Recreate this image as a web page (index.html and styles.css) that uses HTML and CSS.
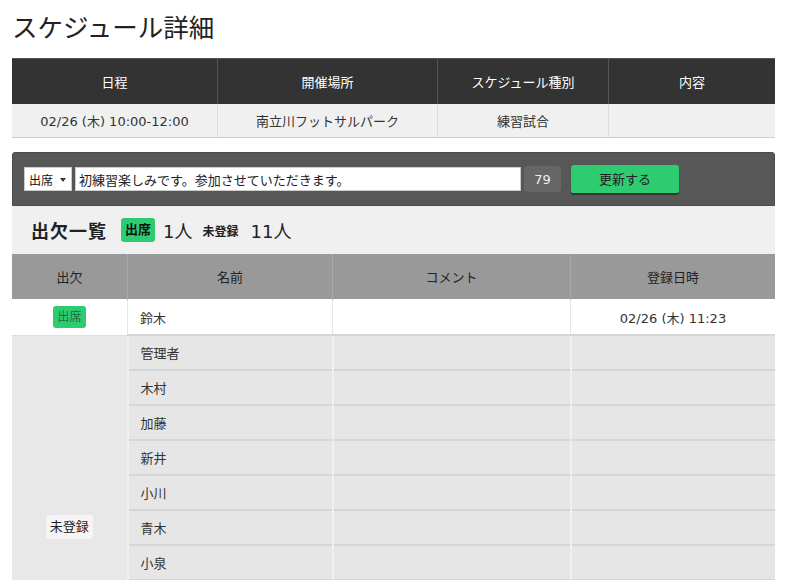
FILE: index.html
```html
<!DOCTYPE html>
<html lang="ja">
<head>
<meta charset="utf-8">
<link rel="stylesheet" href="styles.css">
</head>
<body>
<div class="page">
  <h1 class="title">スケジュール詳細</h1>
  <table class="info">
    <thead>
      <tr><th class="c1">日程</th><th class="c2">開催場所</th><th class="c3">スケジュール種別</th><th class="c4">内容</th></tr>
    </thead>
    <tbody>
      <tr><td>02/26 (木) 10:00-12:00</td><td>南立川フットサルパーク</td><td>練習試合</td><td></td></tr>
    </tbody>
  </table>

  <div class="panel">
    <div class="select">出席<span class="caret"></span></div>
    <div class="input">初練習楽しみです。参加させていただきます。</div>
    <div class="count">79</div>
    <div class="btn">更新する</div>
  </div>

  <div class="summary">
    <span class="sum-title">出欠一覧</span>
    <span class="badge-on">出席</span>
    <span class="num">1人</span>
    <span class="unreg">未登録</span>
    <span class="num">11人</span>
  </div>

  <table class="att">
    <thead>
      <tr><th class="a1">出欠</th><th class="a2">名前</th><th class="a3">コメント</th><th class="a4">登録日時</th></tr>
    </thead>
    <tbody>
      <tr class="yes"><td class="st"><span class="badge-sm">出席</span></td><td class="nm">鈴木</td><td></td><td class="dt">02/26 (木) 11:23</td></tr>
      <tr class="no"><td class="st" rowspan="11"><span class="badge-un">未登録</span></td><td class="nm">管理者</td><td></td><td></td></tr>
      <tr class="no"><td class="nm">木村</td><td></td><td></td></tr>
      <tr class="no"><td class="nm">加藤</td><td></td><td></td></tr>
      <tr class="no"><td class="nm">新井</td><td></td><td></td></tr>
      <tr class="no"><td class="nm">小川</td><td></td><td></td></tr>
      <tr class="no"><td class="nm">青木</td><td></td><td></td></tr>
      <tr class="no"><td class="nm">小泉</td><td></td><td></td></tr>
      <tr class="no"><td class="nm"></td><td></td><td></td></tr>
      <tr class="no"><td class="nm"></td><td></td><td></td></tr>
      <tr class="no"><td class="nm"></td><td></td><td></td></tr>
      <tr class="no"><td class="nm"></td><td></td><td></td></tr>
    </tbody>
  </table>
</div>
</body>
</html>
```
FILE: styles.css
```css
html, body { margin: 0; padding: 0; background: #fff; }
body {
  font-family: "DejaVu Sans", "Noto Sans CJK JP", sans-serif;
  font-size: 13px;
  color: #333;
}
.page { width: 763px; padding: 0 12px; }
.title {
  margin: 0;
  padding-top: 9px;
  height: 58px;
  box-sizing: border-box;
  font-family: "Noto Sans CJK JP", sans-serif;
  font-size: 25.5px;
  font-weight: normal;
  color: #222;
  line-height: 34px;
}
table { border-collapse: collapse; width: 763px; table-layout: fixed; }
.info th {
  background: #333;
  color: #fff;
  font-weight: normal;
  height: 45px;
  padding: 0;
  border-left: 1px solid #555;
  border-top: 1px solid #555;
}
.info th:first-child, .info td:first-child { border-left: none; }
.info .c1 { width: 205px; }
.info .c2 { width: 219px; }
.info .c3 { width: 170px; }
.info td {
  background: #f0f0f0;
  height: 33px;
  padding: 0;
  text-align: center;
  border-left: 1px solid #ddd;
  border-bottom: 1px solid #ccc;
}
.panel {
  margin-top: 14px;
  height: 54px;
  box-sizing: border-box;
  background: #575757;
  border: 1px solid #4a4a4a;
  border-radius: 3px 3px 0 0;
  display: flex;
  align-items: center;
  padding: 0 11px;
}
.select {
  width: 48px; height: 24px; box-sizing: border-box;
  background: #fff; border: 1px solid #ccc;
  display: flex; align-items: center; padding-left: 4px;
  font-size: 12px; color: #111;
  position: relative;
}
.caret {
  position: absolute; right: 5px; top: 10px;
  width: 0; height: 0;
  border-left: 3px solid transparent; border-right: 3px solid transparent;
  border-top: 4px solid #333;
}
.input {
  margin-left: 3px;
  width: 446px; height: 24px; box-sizing: border-box;
  background: #fff; border: 1px solid #ccc;
  padding-left: 3px; display: flex; align-items: center;
  font-size: 13px; color: #222;
}
.count {
  margin-left: 3px;
  width: 37px; height: 26px;
  background: #666; border-radius: 4px;
  color: #eee; display: flex; align-items: center; justify-content: center;
  font-size: 13px;
}
.btn {
  margin-left: 10px;
  width: 108px; height: 29px; box-sizing: border-box;
  background: #2ecc71; border-radius: 3px;
  border-bottom: 1px solid #333;
  box-shadow: 0 1px 1px rgba(0,0,0,0.4);
  display: flex; align-items: center; justify-content: center;
  color: #222; font-size: 13px;
}
.summary {
  height: 48px;
  background: #f0f0f0;
  display: flex; align-items: center;
  padding-left: 19px;
  color: #222;
}
.sum-title { font-size: 18px; font-weight: bold; margin-right: 14px; letter-spacing: 1px; }
.badge-on {
  background: #2ecc71; color: #111; font-weight: bold;
  font-size: 13px; padding: 0 4px; height: 24px; line-height: 24px;
  border-radius: 3px; margin-right: 8px;
}
.num { font-size: 18px; margin-right: 10px; }
.unreg { font-size: 12px; font-weight: bold; margin-right: 12px; }
.att th {
  background: #999;
  color: #222;
  font-weight: normal;
  height: 45px;
  padding: 0;
  border-left: 1px solid #aaa;
}
.att th:first-child { border-left: none; }
.att .a1 { width: 115px; }
.att .a2 { width: 204px; }
.att .a3 { width: 237px; }
.att td { padding: 0; height: 34px; }
.att tr.yes td {
  background: #fff;
  border-left: 1px solid #e6e6e6;
  border-bottom: 1px solid #ddd;
  border-top: 1px solid #fff;
}
.att tr.yes td:first-child { border-left: none; }
.att tr.no td {
  background: #e6e6e6;
  border-left: 2px solid #f0f0f0;
  border-top: 2px solid #d6d6d6;
  height: 33px;
}
.att tr.no td.st {
  border-left: none;
  border-top: 1px solid #ddd;
  background: #e8e8e8;
  vertical-align: middle;
  text-align: center;
}
.st { text-align: center; }
.nm { padding-left: 12px !important; text-align: left; }
.dt { text-align: center; }
.badge-sm {
  display: inline-block;
  background: #2ecc71; color: #1d6f3a;
  font-size: 12px; padding: 0 4px; height: 22px; line-height: 22px;
  border-radius: 3px;
}
.badge-un {
  display: inline-block;
  background: #f5f5f5; color: #222;
  font-size: 13px; padding: 0 4px; height: 24px; line-height: 24px;
  border-radius: 3px;
}
```
